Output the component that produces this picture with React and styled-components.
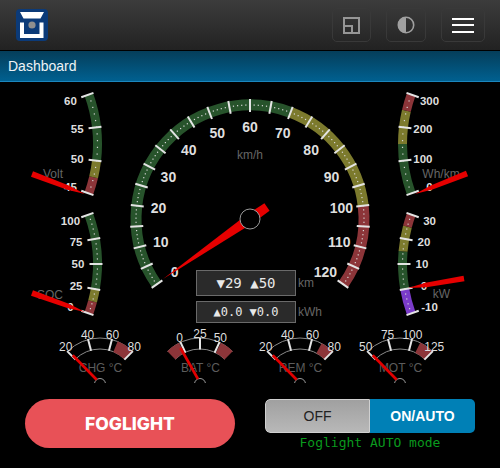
import React from 'react'
import styled, { createGlobalStyle } from 'styled-components'

const GREEN = '#27532b'
const OLIVE = '#7c7a2d'
const RED = '#8c3539'
const PURPLE = '#7a3bc9'
const TICK = '#e4e4e4'

const polar = (cx, cy, r, deg) => {
  const a = (deg * Math.PI) / 180
  return [cx + r * Math.sin(a), cy - r * Math.cos(a)]
}

const arcPath = (cx, cy, r, from, to) => {
  const [x1, y1] = polar(cx, cy, r, from)
  const [x2, y2] = polar(cx, cy, r, to)
  const sweep = to > from ? 1 : 0
  const large = Math.abs(to - from) > 180 ? 1 : 0
  return `M${x1} ${y1}A${r} ${r} 0 ${large} ${sweep} ${x2} ${y2}`
}

// tapered needle: tip -> kink -> tail, widths measured across the needle
const needlePoints = ([tx, ty], [ex, ey], tailWidth, kink = 1, kinkWidth = tailWidth) => {
  const len = Math.hypot(ex - tx, ey - ty)
  const ux = (ex - tx) / len
  const uy = (ey - ty) / len
  const nx = -uy
  const ny = ux
  const kx = tx + ux * len * kink
  const ky = ty + uy * len * kink
  const pts = [
    [tx, ty],
    [kx + (nx * kinkWidth) / 2, ky + (ny * kinkWidth) / 2],
    [ex + (nx * tailWidth) / 2, ey + (ny * tailWidth) / 2],
    [ex - (nx * tailWidth) / 2, ey - (ny * tailWidth) / 2],
    [kx - (nx * kinkWidth) / 2, ky - (ny * kinkWidth) / 2],
  ]
  return pts.map(p => p.join(',')).join(' ')
}

function Scale({ cx, cy, min, max, start, end, band, bandWidth, zones, major, labels, dot, tickIn, labelR, labelSize, tickW = 2 }) {
  const angle = v => start + ((v - min) / (max - min)) * (end - start)
  const dots = []
  for (let v = min; v <= max + 0.001; v += dot) dots.push(v)
  const ticks = []
  for (let v = min; v <= max + 0.001; v += major) ticks.push(v)
  const outer = band + bandWidth / 2
  return (
    <g>
      {zones.map(z => (
        <path key={z.from} d={arcPath(cx, cy, band, angle(z.from), angle(z.to))} fill="none" stroke={z.color} strokeWidth={bandWidth} />
      ))}
      {dots.map(v => {
        const [x, y] = polar(cx, cy, band, angle(v))
        return <rect key={v} x={x - 0.6} y={y - 0.6} width="1.2" height="1.2" fill="#d8d8d8" />
      })}
      {ticks.map(v => {
        const [x1, y1] = polar(cx, cy, outer + 0.5, angle(v))
        const [x2, y2] = polar(cx, cy, tickIn, angle(v))
        return <line key={v} x1={x1} y1={y1} x2={x2} y2={y2} stroke={TICK} strokeWidth={tickW} />
      })}
      {labels.map(v => {
        const [x, y] = polar(cx, cy, labelR, angle(v))
        return (
          <DialNumber key={v} x={x} y={y} size={labelSize} textAnchor="middle" dominantBaseline="central">
            {v}
          </DialNumber>
        )
      })}
    </g>
  )
}

function SideGauge({ side, cy, min, max, zones, major, dot, labels, title, titlePos, tip, tail }) {
  const left = side === 'left'
  const viewX = left ? 20 : 380
  const cx = left ? -47 : 547
  return (
    <SideSvg viewBox={`${viewX} ${cy - 60} 100 120`}>
      <Scale
        cx={cx} cy={cy} min={min} max={max}
        start={left ? 110 : -110} end={left ? 70 : -70}
        band={144.5} bandWidth={9} zones={zones}
        major={major} dot={dot} labels={labels}
        tickIn={136.5} labelR={125} labelSize={11.5}
      />
      <DialTitle x={titlePos[0]} y={titlePos[1]} textAnchor="middle" dominantBaseline="central">{title}</DialTitle>
      <polygon points={needlePoints(tip, tail, 5.8, 0.32, 4.4)} fill="#e60000" />
    </SideSvg>
  )
}

function SmallGauge({ min, max, labels, zones, title, tip, base }) {
  const cx = 50
  const cy = 60
  const ang = v => -45 + ((v - min) / (max - min)) * 90
  return (
    <SmallSvg viewBox="0 0 100 59">
      <path d={arcPath(cx, cy, 46, -45, 45)} fill="none" stroke="#8a8a8a" strokeWidth="1" />
      <path d={arcPath(cx, cy, 35, -45, 45)} fill="none" stroke="#8a8a8a" strokeWidth="1" />
      {zones.map(([a, b]) => (
        <path key={a} d={arcPath(cx, cy, 40.5, a, b)} fill="none" stroke={RED} strokeWidth="11.5" />
      ))}
      {labels.map(v => {
        const [x1, y1] = polar(cx, cy, 46.5, ang(v))
        const [x2, y2] = polar(cx, cy, 34.5, ang(v))
        return <line key={v} x1={x1} y1={y1} x2={x2} y2={y2} stroke={TICK} strokeWidth="2" />
      })}
      {labels.map(v => {
        const [x, y] = polar(cx, cy, 50.5, ang(v) * 0.95)
        return <SmallNumber key={v} x={x} y={y} textAnchor="middle" dominantBaseline="central">{v}</SmallNumber>
      })}
      <SmallTitle x={cx + 0.5} y={43.5} textAnchor="middle" dominantBaseline="central">{title}</SmallTitle>
      <circle cx={cx} cy={cy} r="5.5" fill="#000" stroke="#9a9a9a" strokeWidth="1" />
      <line x1={tip[0]} y1={tip[1]} x2={base[0]} y2={base[1]} stroke="#e00000" strokeWidth="2.7" />
    </SmallSvg>
  )
}

export default function App() {
  const speedLabels = []
  for (let v = 0; v <= 120; v += 10) speedLabels.push(v)
  return (
    <>
      <Global />
      <Page>
        <Header>
          <Logo viewBox="0 0 32 32">
            <rect width="32" height="32" rx="4" fill="#0b3a78" />
            <polygon points="4,3 28,3 24.5,9.5 7.5,9.5" fill="#fff" />
            <path d="M6 13.5V27H25.5V13.5" fill="none" stroke="#fff" strokeWidth="4" />
            <circle cx="16" cy="16" r="3.6" fill="#8f8f8f" />
          </Logo>
          <IconButtons>
            <IconButton width={39}>
              <svg width="17" height="17" viewBox="0 0 17 17">
                <path d="M1 1H16V16H1ZM1 9H9V16" fill="none" stroke="#969696" strokeWidth="2" />
              </svg>
            </IconButton>
            <IconButton width={40}>
              <svg width="18" height="18" viewBox="0 0 18 18">
                <circle cx="9" cy="9" r="7.7" fill="none" stroke="#a0a0a0" strokeWidth="1.6" />
                <path d="M9 1A8 8 0 0 0 9 17Z" fill="#a0a0a0" />
              </svg>
            </IconButton>
            <IconButton width={44}>
              <Burger><span /><span /><span /></Burger>
            </IconButton>
          </IconButtons>
        </Header>
        <TitleBar>Dashboard</TitleBar>

        <DialRow>
          <SideStack>
            <SideGauge
              side="left" cy={144} min={45} max={60} major={5} dot={1} labels={[45, 50, 55, 60]}
              zones={[{ from: 45, to: 47.5, color: RED }, { from: 47.5, to: 50, color: OLIVE }, { from: 50, to: 60, color: GREEN }]}
              title="Volt" titlePos={[53, 174]} tip={[85, 194]} tail={[32, 174]}
            />
            <SideGauge
              side="left" cy={264} min={0} max={100} major={25} dot={5} labels={[0, 25, 50, 75, 100]}
              zones={[{ from: 0, to: 12.5, color: RED }, { from: 12.5, to: 25, color: OLIVE }, { from: 25, to: 100, color: GREEN }]}
              title="SOC" titlePos={[50, 295]} tip={[85, 312]} tail={[32, 293]}
            />
          </SideStack>

          <MainDial>
            <MainSvg viewBox="120 84 260 240">
              <Scale
                cx={250} cy={219} min={0} max={120} start={-125} end={125}
                band={114} bandWidth={11} major={5} dot={1} labels={speedLabels}
                zones={[{ from: 0, to: 70, color: GREEN }, { from: 70, to: 100, color: OLIVE }, { from: 100, to: 120, color: RED }]}
                tickIn={107} labelR={92} labelSize={14}
              />
              <DialTitle x={250} y={155} textAnchor="middle" dominantBaseline="central">km/h</DialTitle>
              <polygon points={needlePoints([163, 279], [267, 207], 9, 0.84, 10.5)} fill="#e60000" />
              <circle cx="250" cy="219" r="10" fill="#000" stroke="#9a9a9a" strokeWidth="1" />
            </MainSvg>
            <Readouts>
              <ReadoutRow>
                <ReadoutBox size={14} height={26}>▼29 ▲50</ReadoutBox>
                <Unit>km</Unit>
              </ReadoutRow>
              <ReadoutRow>
                <ReadoutBox size={12} height={22}>▲0.0 ▼0.0</ReadoutBox>
                <Unit>kWh</Unit>
              </ReadoutRow>
            </Readouts>
          </MainDial>

          <SideStack>
            <SideGauge
              side="right" cy={144} min={0} max={300} major={100} dot={20} labels={[0, 100, 200, 300]}
              zones={[{ from: 0, to: 150, color: GREEN }, { from: 150, to: 250, color: OLIVE }, { from: 250, to: 300, color: RED }]}
              title="Wh/km" titlePos={[441, 174]} tip={[415, 194]} tail={[467, 173.5]}
            />
            <SideGauge
              side="right" cy={264} min={-10} max={30} major={10} dot={2} labels={[-10, 0, 10, 20, 30]}
              zones={[{ from: -10, to: 0, color: PURPLE }, { from: 0, to: 15, color: GREEN }, { from: 15, to: 25, color: OLIVE }, { from: 25, to: 30, color: RED }]}
              title="kW" titlePos={[441.5, 294]} tip={[408, 288]} tail={[464, 278.5]}
            />
          </SideStack>
        </DialRow>

        <SmallRow>
          <SmallGauge min={20} max={80} labels={[20, 40, 60, 80]} zones={[[22.5, 45]]} title="CHG °C" tip={[22.7, 31.3]} base={[46.7, 55.7]} />
          <SmallGauge min={-20} max={70} labels={[0, 25, 50]} zones={[[-45, -27], [27, 45]]} title="BAT °C" tip={[30.5, 24]} base={[48, 55]} />
          <SmallGauge min={20} max={80} labels={[20, 40, 60, 80]} zones={[[28, 45]]} title="REM °C" tip={[22.7, 31.3]} base={[46.7, 55.7]} />
          <SmallGauge min={50} max={125} labels={[50, 75, 100, 125]} zones={[[26, 45]]} title="MOT °C" tip={[22.7, 31.3]} base={[46.7, 55.7]} />
        </SmallRow>

        <Controls>
          <Foglight>FOGLIGHT</Foglight>
          <ToggleColumn>
            <Toggle>
              <ToggleOff>OFF</ToggleOff>
              <ToggleOn>ON/AUTO</ToggleOn>
            </Toggle>
            <ModeNote>Foglight AUTO mode</ModeNote>
          </ToggleColumn>
        </Controls>
      </Page>
    </>
  )
}

const Global = createGlobalStyle`
  html, body {
    margin: 0;
    padding: 0;
    background: #000;
  }
  body {
    font-family: "Liberation Sans", Arial, sans-serif;
  }
`
const Page = styled.div`
  width: 500px;
  height: 468px;
  overflow: hidden;
  background: #000;
`
const Header = styled.header`
  height: 50px;
  box-sizing: content-box;
  display: flex;
  align-items: center;
  justify-content: space-between;
  padding-left: 16px;
  padding-right: 15px;
  background: linear-gradient(#3c3c3c, #222);
  border-bottom: 1px solid #000;
`
const Logo = styled.svg`
  width: 32px;
  height: 32px;
  display: block;
`
const IconButtons = styled.div`
  display: flex;
  gap: 15px;
`
const IconButton = styled.div`
  width: ${props => props.width}px;
  height: 34px;
  box-sizing: border-box;
  border: 1px solid #393939;
  border-radius: 5px;
  display: flex;
  align-items: center;
  justify-content: center;
`
const Burger = styled.div`
  width: 22px;
  display: flex;
  flex-direction: column;
  gap: 4.5px;
  span {
    display: block;
    height: 2px;
    background: #fff;
  }
`
const TitleBar = styled.div`
  height: 30px;
  line-height: 30px;
  padding-left: 8px;
  font-size: 14px;
  color: #eef3f6;
  background: linear-gradient(#053e5a, #006090);
  border-bottom: 1px solid #1b86bd;
`
const DialRow = styled.div`
  display: flex;
  justify-content: center;
  margin-top: 2px;
  height: 240px;
`
const SideStack = styled.div`
  width: 100px;
  display: flex;
  flex-direction: column;
`
const SideSvg = styled.svg`
  width: 100px;
  height: 120px;
  display: block;
`
const MainDial = styled.div`
  position: relative;
  width: 260px;
  height: 240px;
`
const MainSvg = styled.svg`
  width: 260px;
  height: 240px;
  display: block;
`
const DialNumber = styled.text`
  font-family: "Liberation Sans", Arial, sans-serif;
  font-weight: 700;
  font-size: ${props => props.size}px;
  fill: #dedede;
`
const DialTitle = styled.text`
  font-family: "Liberation Sans", Arial, sans-serif;
  font-size: 12px;
  fill: #666;
`
const Readouts = styled.div`
  position: absolute;
  left: 76px;
  top: 186px;
  display: flex;
  flex-direction: column;
  gap: 5px;
`
const ReadoutRow = styled.div`
  display: flex;
  align-items: center;
  gap: 2px;
`
const ReadoutBox = styled.div`
  width: 100px;
  height: ${props => props.height}px;
  box-sizing: border-box;
  background: #2a2a2a;
  border: 1px solid #6a6a6a;
  color: #e8e8e8;
  font-family: "DejaVu Sans Mono", monospace;
  font-size: ${props => props.size}px;
  display: flex;
  align-items: center;
  justify-content: center;
  white-space: pre;
`
const Unit = styled.span`
  font-size: 12px;
  color: #666;
`
const SmallRow = styled.div`
  display: flex;
  padding: 0 50px;
  height: 59px;
`
const SmallSvg = styled.svg`
  width: 100px;
  height: 59px;
  display: block;
  overflow: hidden;
`
const SmallNumber = styled.text`
  font-family: "Liberation Sans", Arial, sans-serif;
  font-size: 12px;
  fill: #dedede;
`
const SmallTitle = styled.text`
  font-family: "Liberation Sans", Arial, sans-serif;
  font-size: 12px;
  fill: #5c5c5c;
`
const Controls = styled.div`
  display: flex;
  justify-content: space-between;
  padding: 16px 25px 0;
`
const Foglight = styled.button`
  width: 210px;
  height: 49px;
  border: none;
  border-radius: 25px;
  background: #e85157;
  color: #fff;
  font-family: Inter, "Liberation Sans", sans-serif;
  font-weight: 800;
  font-size: 17.5px;
  padding: 0;
`
const ToggleColumn = styled.div`
  width: 210px;
  display: flex;
  flex-direction: column;
  align-items: center;
`
const Toggle = styled.div`
  width: 100%;
  height: 34px;
  display: flex;
  border-radius: 5px;
  overflow: hidden;
`
const ToggleOff = styled.div`
  width: 105px;
  box-sizing: border-box;
  border: 1px solid #d0d0d0;
  border-radius: 5px 0 0 5px;
  background: linear-gradient(#a0a0a0, #b8b8b8);
  color: #222;
  font-size: 14px;
  display: flex;
  align-items: center;
  justify-content: center;
`
const ToggleOn = styled.div`
  flex: 1;
  background: #0080b6;
  color: #fff;
  font-size: 14px;
  font-weight: 700;
  display: flex;
  align-items: center;
  justify-content: center;
`
const ModeNote = styled.div`
  margin-top: 2px;
  font-family: "DejaVu Sans Mono", monospace;
  font-size: 13px;
  color: #0a9a1e;
`
